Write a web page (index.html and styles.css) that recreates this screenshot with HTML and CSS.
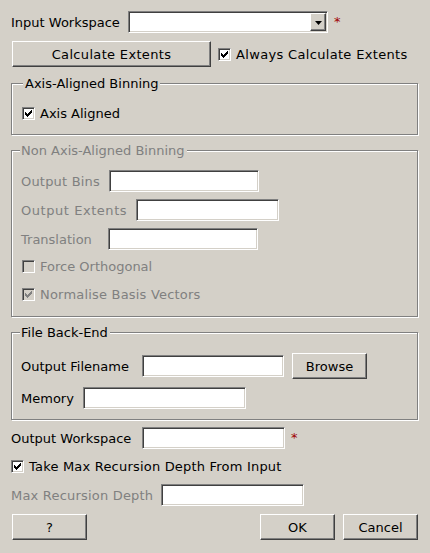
FILE: index.html
```html
<!DOCTYPE html>
<html>
<head>
<meta charset="utf-8">
<link rel="stylesheet" href="styles.css">
</head>
<body>
<div class="dialog">
  <div class="row h22">
    <span class="lbl w117">Input Workspace</span>
    <div class="field combo"><span class="combo-btn"><svg width="7" height="4" viewBox="0 0 7 4"><path d="M0 0h7L3.5 4z"/></svg></span></div>
    <span class="req">*</span>
  </div>
  <div class="row h26 mt8">
    <button class="btn w199 sp-b">Calculate Extents</button>
    <span class="check ml7"><span class="box"><svg width="7" height="7" viewBox="0 0 7 7" shape-rendering="crispEdges"><path d="M0 2h1v3H0zM1 3h1v3H1zM2 4h1v3H2zM3 3h1v3H3zM4 2h1v3H4zM5 1h1v3H5zM6 0h1v3H6z"/></svg></span><span class="ctext sp-b">Always Calculate Extents</span></span>
  </div>

  <fieldset class="group g1">
    <legend class="leg-a">Axis-Aligned Binning</legend>
    <div class="row h22">
      <span class="check ml1"><span class="box"><svg width="7" height="7" viewBox="0 0 7 7" shape-rendering="crispEdges"><path d="M0 2h1v3H0zM1 3h1v3H1zM2 4h1v3H2zM3 3h1v3H3zM4 2h1v3H4zM5 1h1v3H5zM6 0h1v3H6z"/></svg></span><span class="ctext">Axis Aligned</span></span>
    </div>
  </fieldset>

  <fieldset class="group g2 dis">
    <legend>Non Axis-Aligned Binning</legend>
    <div class="row h22">
      <span class="lbl w88 sp-a">Output Bins</span>
      <div class="field w150"></div>
    </div>
    <div class="row h22 mt7">
      <span class="lbl w115 sp-c">Output Extents</span>
      <div class="field w143"></div>
    </div>
    <div class="row h22 mt7">
      <span class="lbl w87">Translation</span>
      <div class="field w150"></div>
    </div>
    <div class="row h21 mt6">
      <span class="check ml1"><span class="box off"></span><span class="ctext">Force Orthogonal</span></span>
    </div>
    <div class="row h21 mt7">
      <span class="check ml1"><span class="box off"><svg width="7" height="7" viewBox="0 0 7 7" shape-rendering="crispEdges"><path d="M0 2h1v3H0zM1 3h1v3H1zM2 4h1v3H2zM3 3h1v3H3zM4 2h1v3H4zM5 1h1v3H5zM6 0h1v3H6z"/></svg></span><span class="ctext sp-a">Normalise Basis Vectors</span></span>
    </div>
  </fieldset>

  <fieldset class="group g3">
    <legend>File Back-End</legend>
    <div class="row h26">
      <span class="lbl w121">Output Filename</span>
      <div class="field w142"></div>
      <button class="btn w75 ml8">Browse</button>
    </div>
    <div class="row h22 mt8">
      <span class="lbl w62">Memory</span>
      <div class="field w163"></div>
    </div>
  </fieldset>

  <div class="row h22 mt7">
    <span class="lbl w131">Output Workspace</span>
    <div class="field w143"></div>
    <span class="req">*</span>
  </div>
  <div class="row h22 mt6">
    <span class="check"><span class="box"><svg width="7" height="7" viewBox="0 0 7 7" shape-rendering="crispEdges"><path d="M0 2h1v3H0zM1 3h1v3H1zM2 4h1v3H2zM3 3h1v3H3zM4 2h1v3H4zM5 1h1v3H5zM6 0h1v3H6z"/></svg></span><span class="ctext sp-a">Take Max Recursion Depth From Input</span></span>
  </div>
  <div class="row h22 mt7">
    <span class="lbl w150 dis sp-a">Max Recursion Depth</span>
    <div class="field w143"></div>
  </div>
  <div class="row h26 mt8 footer">
    <button class="btn w75 ml1">?</button>
    <div class="btns">
      <button class="btn w75">OK</button>
      <button class="btn w75">Cancel</button>
    </div>
  </div>
</div>
</body>
</html>
```

FILE: styles.css
```css
html, body {
  margin: 0;
  padding: 0;
  background: #d4d0c8;
}
body {
  font-family: "DejaVu Sans", "Liberation Sans", sans-serif;
  font-size: 13px;
  color: #000;
  width: 430px;
  height: 553px;
  overflow: hidden;
}
.dialog {
  box-sizing: border-box;
  width: 430px;
  padding: 11px 12px 0 11px;
}
.row {
  display: flex;
  align-items: center;
  line-height: 15px;
}
.h21 { height: 21px; }
.h22 { height: 22px; }
.h26 { height: 26px; }
.mt6 { margin-top: 6px; }
.mt7 { margin-top: 7px; }
.mt8 { margin-top: 8px; }
.ml1 { margin-left: 1px; }
.ml7 { margin-left: 7px; }
.ml8 { margin-left: 8px; }

.sp-a { letter-spacing: 0.2px; }
.sp-b { letter-spacing: 0.33px; }
.sp-c { letter-spacing: 0.55px; }

.lbl { flex: none; white-space: nowrap; }
.w62 { width: 62px; }
.w75 { width: 75px; }
.w87 { width: 87px; }
.w88 { width: 88px; }
.w115 { width: 115px; }
.w117 { width: 117px; }
.w121 { width: 121px; }
.w131 { width: 131px; }
.w142 { width: 142px; }
.w143 { width: 143px; }
.w150 { width: 150px; }
.w163 { width: 163px; }
.w199 { width: 199px; }

.dis, .dis .lbl, .dis .ctext, .dis legend { color: #808080; }

.field {
  box-sizing: border-box;
  height: 22px;
  flex: none;
  background: #fff;
  border: 1px solid;
  border-color: #808080 #fff #fff #808080;
  box-shadow: inset 1px 1px 0 #404040, inset -1px -1px 0 #d4d0c8;
}
.combo {
  width: 200px;
  display: flex;
  justify-content: flex-end;
  padding: 1px;
}
.combo-btn {
  box-sizing: border-box;
  width: 16px;
  height: 18px;
  background: #d4d0c8;
  border: 1px solid;
  border-color: #fff #404040 #404040 #fff;
  box-shadow: inset -1px -1px 0 #808080;
  display: flex;
  align-items: center;
  justify-content: center;
}
.combo-btn svg { fill: #000; display: block; margin-top: 1px; }

.req {
  color: #a00000;
  margin-left: 6px;
  font-size: 13px;
  align-self: center;
  margin-top: -2px;
}

.btn {
  box-sizing: border-box;
  flex: none;
  height: 26px;
  margin-top: 0;
  margin-bottom: 0;
  padding: 0;
  font-family: inherit;
  font-size: inherit;
  color: #000;
  background: #d4d0c8;
  border: 1px solid;
  border-color: #fff #404040 #404040 #fff;
  box-shadow: inset -1px -1px 0 #808080;
  border-radius: 0;
}
.btn.w199 { margin-left: 1px; }

.check {
  display: flex;
  align-items: center;
}
.box {
  box-sizing: border-box;
  width: 13px;
  height: 13px;
  flex: none;
  background: #fff;
  border: 1px solid;
  border-color: #808080 #fff #fff #808080;
  box-shadow: inset 1px 1px 0 #404040, inset -1px -1px 0 #d4d0c8;
  display: flex;
  align-items: center;
  justify-content: center;
}
.box svg { display: block; fill: #000; }
.box.off { background: #d4d0c8; }
.box.off svg { fill: #808080; }
.ctext { margin-left: 5px; white-space: nowrap; }

.group {
  margin: 0;
  min-width: 0;
  border: 1px solid #808080;
  box-shadow: 1px 1px 0 #fff, inset 1px 1px 0 #fff;
}
.group legend {
  padding: 0 2px 0 1px;
  margin-left: -1px;
  line-height: 15px;
  background: #d4d0c8;
}
.group legend.leg-a { margin-left: 2px; padding-left: 2px; }
.g1 { margin-top: 9px; padding: 11px 10px 10px 9px; }
.g2 { margin-top: 8px; padding: 12px 10px 11px 9px; }
.g3 { margin-top: 8px; padding: 13px 10px 10px 9px; }

.footer { justify-content: space-between; }
.btns { display: flex; gap: 8px; }
```
